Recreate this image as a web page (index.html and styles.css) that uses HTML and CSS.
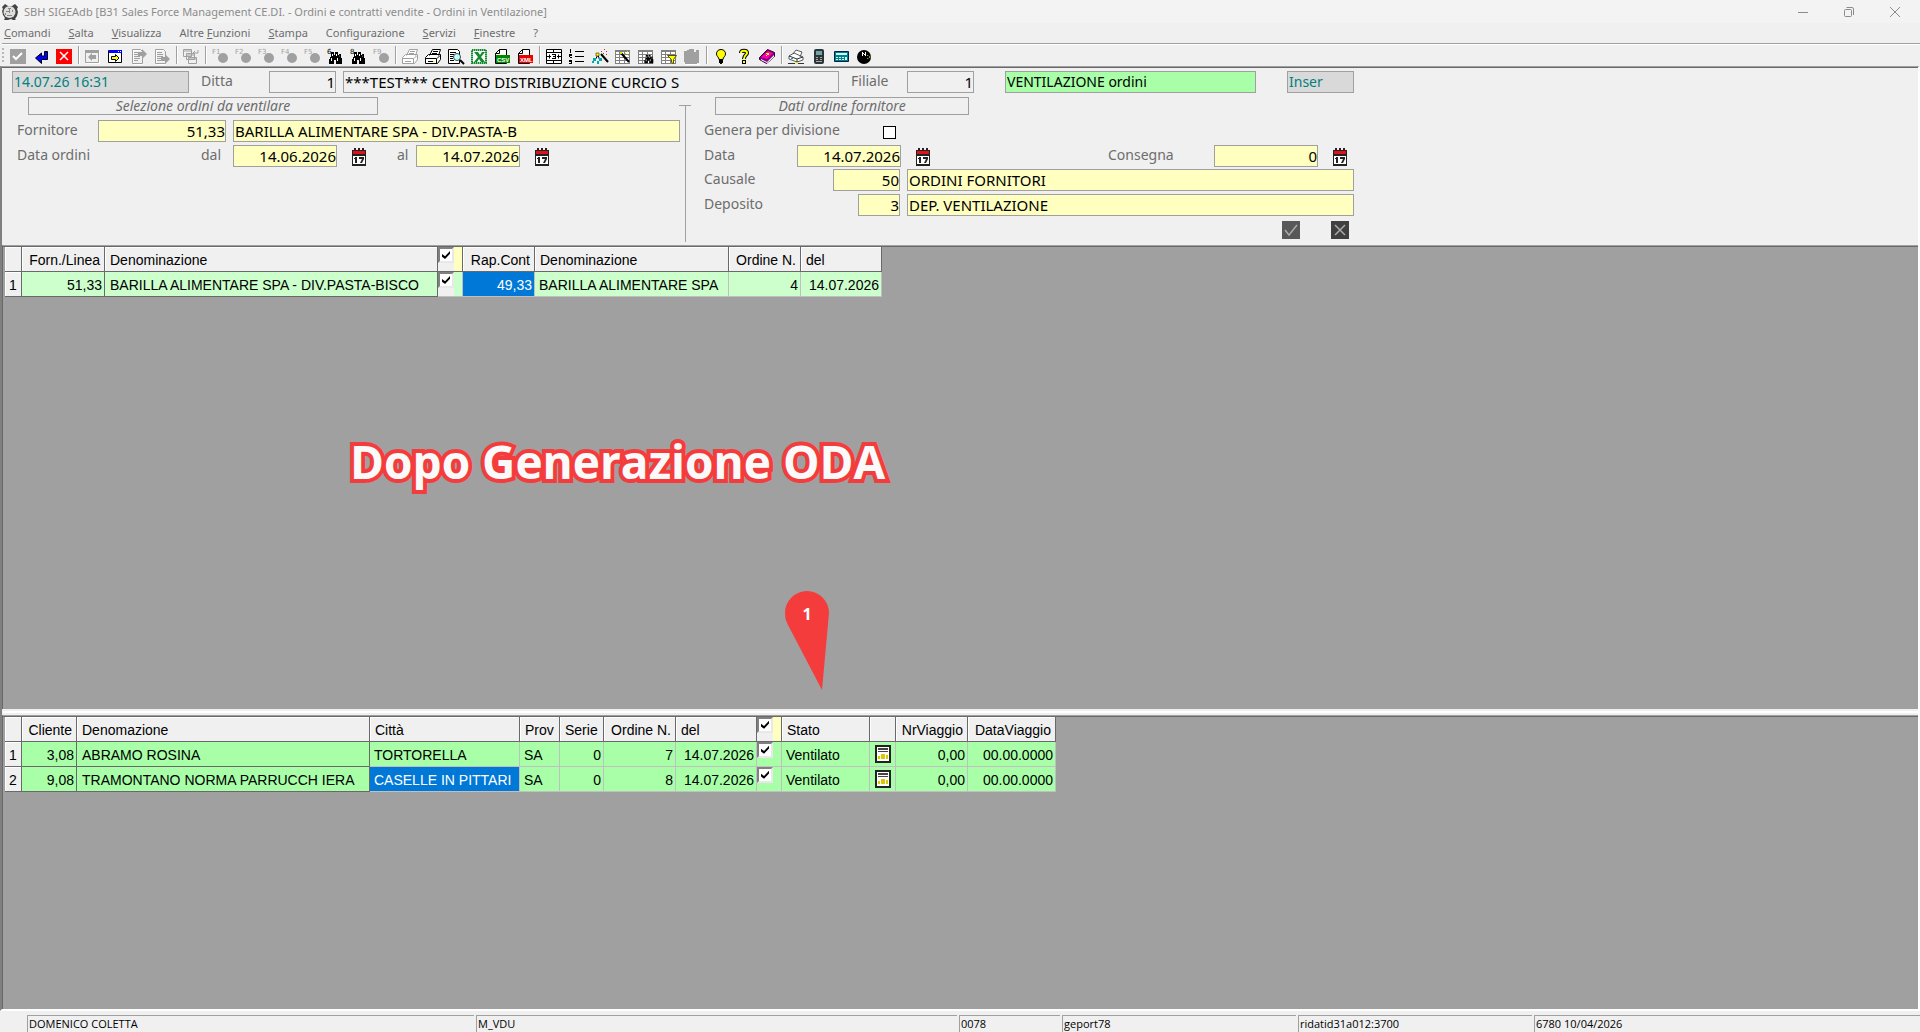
FILE: index.html
```
<!DOCTYPE html>
<html lang="it">
<head>
<meta charset="utf-8">
<title>SBH SIGEAdb</title>
<link rel="stylesheet" href="styles.css">
</head>
<body>
<svg class="defs" aria-hidden="true">
  <symbol id="cal" viewBox="0 0 16 18">
    <path fill="#222" d="M1 2h2V0h2v2h2V0h2v2h2V0h2v2h2v16H1z"/>
    <path fill="#e0101c" d="M2 3h12v3H2z"/><path fill="#fff" d="M2 8h12v8H2z"/>
    <path fill="#222" d="M4 9h2v6H4zM3 10h1v1H3zM8 9h5v2l-2 4H9l2-4H8z"/>
  </symbol>
  <symbol id="binoc" viewBox="0 0 16 16">
    <path d="M4 3h3v3h1V3h3v3h1v2h1v2h1v5h-5v-4H7v4H2v-5h1V8h1z"/><path d="M12 5h2v4h1v6h-2z"/>
    <path fill="#fff" d="M4 9h1v3H4zM10 9h1v3h-1zM5 5h1v2H5zM9 5h1v2H9z"/>
  </symbol>
  <symbol id="grid" viewBox="0 0 16 16">
    <path fill="#fff" d="M0 1h15v13H0z"/><path fill="#808080" d="M0 1h15v2H0zM0 3h1v12H0zM4 3h1v12H4zM9 3h1v12H9zM14 3h1v12h-1zM0 14h15v1H0zM1 5h13v1H1zM1 8h13v1H1zM1 11h13v1H1z"/>
  </symbol>
  <symbol id="page" viewBox="0 0 16 16">
    <path fill="#fff" stroke="#000" d="M1.500 4.500L5.500.5H12.500V14.500H1.500z"/><path fill="none" stroke="#000" d="M1.500 4.500H5.500V.5"/>
  </symbol>
  <symbol id="print" viewBox="0 0 16 16">
    <path fill="#fff" stroke="currentColor" d="M4.500 6.500L7.500.5h8l-2 6M.5 8.500l3-3h12v5l-3 4H.5z"/>
    <path fill="none" stroke="currentColor" d="M8 2.500h5M7 4.500h5M.5 9.500h11v5M12 9.500l3-3M3 12.500h6"/>
  </symbol>
  <symbol id="doc" viewBox="0 0 16 16">
    <path fill="none" stroke="#fff" d="M2.500 1.500h9v14h-9z"/><path fill="none" stroke="#a0a0a0" d="M1.500.5h8l2 2v12h-10zM3 3.500h5M3 5.500h6M3 7.500h6M3 9.500h6M3 11.500h4"/>
  </symbol>
  <symbol id="report" viewBox="0 0 16 18">
    <path fill="#fff" stroke="#222" stroke-width="2" d="M1 1h14v16H1z"/><path fill="#444" d="M3 3h10v2H3zM3 6h10v1H3z"/>
    <path fill="#dcc800" d="M3 11h2v3H3zM6 9h4v5H6zM11 10h2v4h-2z"/>
  </symbol>
</svg>

<header class="titlebar">
  <svg class="appicon" viewBox="0 0 16 16"><path fill="#444" d="M0 3l3-3 3 2h4l3-2 3 3-1 2 1 3-1 4-2 3 1 1h-3l-2-1-3 1H2l1-2-2-3-1-4 1-2z"/><circle cx="7.500" cy="8" r="6" fill="#dededa"/><path fill="#888" d="M6 4h3v1H6zM4 7h4v1H4zM7 5h1v4H7zM5 11h5v1H5zM10 6h1v2h-1zM3 9h1v2H3z"/></svg>
  <h1>SBH SIGEAdb [B31 Sales Force Management CE.DI. - Ordini e contratti vendite - Ordini in Ventilazione]</h1>
  <button class="win" aria-label="Riduci"><svg viewBox="0 0 10 10"><path d="M0 5.500h10"/></svg></button>
  <button class="win" aria-label="Ripristina"><svg viewBox="0 0 10 10"><rect x=".5" y="2.500" width="7" height="7" rx="1"/><path d="M2.500.5H8q1.500 0 1.500 1.500v6"/></svg></button>
  <button class="win" aria-label="Chiudi"><svg viewBox="0 0 10 10"><path d="M0 0l10 10M10 0L0 10"/></svg></button>
</header>

<nav class="menu">
  <a href="#"><u>C</u>omandi</a><a href="#"><u>S</u>alta</a><a href="#"><u>V</u>isualizza</a><a href="#">Altre <u>F</u>unzioni</a><a href="#"><u>S</u>tampa</a><a href="#">Confi<u>g</u>urazione</a><a href="#"><u>S</u>ervizi</a><a href="#"><u>F</u>inestre</a><a href="#">?</a>
</nav>

<div class="toolbar" role="toolbar">
  <button aria-label="Conferma"><svg viewBox="0 0 16 16"><path fill="#a0a0a0" d="M0 0h16v15H0z"/><path fill="none" stroke="#fff" stroke-width="2" d="M3 7l3 3 6-6"/></svg></button>
  <button aria-label="Invio"><svg viewBox="0 0 16 16"><path fill="#00f" stroke="#000" d="M11.500 2.500h3v8h-6v4l-6-5.500 6-5v3h3z"/></svg></button>
  <button aria-label="Annulla"><svg viewBox="0 0 16 16"><path fill="#f00" d="M0 0h16v15H0z"/><path fill="none" stroke="#fff" stroke-width="1.500" d="M4 3l8 8M12 3l-8 8"/></svg></button>
  <hr>
  <button aria-label="Indietro"><svg viewBox="0 0 16 16"><path fill="#fff" d="M1 2h14v13H1z"/><path fill="#f0f0f0" stroke="#a0a0a0" d="M.5 1.500h13v12H.5z"/><path fill="#a0a0a0" d="M0 1h14v3H0zM3 8l4-4v2h4v4H7v2z"/></svg></button>
  <button aria-label="Avanti"><svg viewBox="0 0 16 16"><path fill="#fff" stroke="#000" d="M.5 1.500h13v12H.5z"/><path fill="#00f" d="M1 1h13v3H1z"/><path fill="#fff" d="M10 2h1v1h-1zM12 2h1v1h-1z"/><path fill="#ff0" stroke="#000" d="M3.500 7.500h4v-2l3.500 3.500-3.500 3.500v-2h-4z"/></svg></button>
  <button aria-label="Esporta"><svg viewBox="0 0 16 16"><use href="#doc"/><path fill="#a0a0a0" d="M7 3h4V0l5 5-5 5V7H7z"/></svg></button>
  <button aria-label="Importa"><svg viewBox="0 0 16 16"><use href="#doc"/><path fill="#a0a0a0" d="M7 8h4V5l5 5-5 5v-3H7z"/></svg></button>
  <hr>
  <button aria-label="Copia finestre"><svg viewBox="0 0 16 16"><g fill="#f0f0f0" stroke="#a0a0a0"><path d="M.5.5h8v7h-8zM.5 2h8M3.500 4.500h8v6h-8zM3.500 6h8M5.500 8.500h8v6h-8zM5.500 10h8"/></g><path fill="none" stroke="#a0a0a0" d="M11 4h4V1M12 2l-2 2 2 2"/></svg></button>
  <hr>
  <button class="fkey"><svg viewBox="0 0 16 16"><circle cx="11" cy="9" r="5"/><text y="5">F1</text></svg></button>
  <button class="fkey"><svg viewBox="0 0 16 16"><circle cx="11" cy="9" r="5"/><text y="5">F2</text></svg></button>
  <button class="fkey"><svg viewBox="0 0 16 16"><circle cx="11" cy="9" r="5"/><text y="5">F3</text></svg></button>
  <button class="fkey"><svg viewBox="0 0 16 16"><circle cx="11" cy="9" r="5"/><text y="5">F4</text></svg></button>
  <button class="fkey"><svg viewBox="0 0 16 16"><circle cx="11" cy="9" r="5"/><text y="5">F5</text></svg></button>
  <button class="fnum"><svg viewBox="0 0 16 16"><use href="#binoc"/><text y="5">6</text></svg></button>
  <button class="fnum"><svg viewBox="0 0 16 16"><use href="#binoc"/><text y="5">8</text></svg></button>
  <button class="fkey"><svg viewBox="0 0 16 16"><circle cx="11" cy="9" r="5"/><text y="5">F9</text></svg></button>
  <hr>
  <button aria-label="Stampa elenco" class="dim"><svg viewBox="0 0 16 16"><use href="#print"/></svg></button>
  <button aria-label="Stampa"><svg viewBox="0 0 16 16"><use href="#print"/><path fill="#ff0" d="M8 12h2v1H8z"/></svg></button>
  <button aria-label="Anteprima"><svg viewBox="0 0 16 16"><path fill="#fff" stroke="#000" d="M.5.5h9l2 2v12H.5z"/><path stroke="#000" d="M2 3.500h6M2 5.500h4M2 7.500h3M2 9.500h3M2 11.500h4"/><circle cx="9" cy="8" r="3.500" fill="#bff" stroke="#444"/><path stroke="#000" stroke-width="2" d="M12 11l4 4"/></svg></button>
  <button aria-label="Excel"><svg viewBox="0 0 16 16"><path fill="#fff" stroke="#128a2e" stroke-width="2" stroke-dasharray="1.500 .5" d="M1 1h14v13H1z"/><path fill="#128a2e" d="M3 3h4l2 3 2-3h3l-4 5 4 5h-4l-2-3-2 3H3l4-5z"/></svg></button>
  <button aria-label="CSV" class="tag"><svg viewBox="0 0 16 16"><use href="#page"/><path fill="#080" d="M2 6h14v8H2z"/><text x="3" y="13">CSV</text></svg></button>
  <button aria-label="XML" class="tag"><svg viewBox="0 0 16 16"><use href="#page"/><path fill="#e00" d="M2 6h14v8H2z"/><text x="3" y="13">XML</text></svg></button>
  <hr>
  <button aria-label="Colonne"><svg viewBox="0 0 16 16"><path fill="#fff" stroke="#000" d="M.5.5h15v14H.5zM0 3.500h16M0 11.500h16M7.500 0v4M7.500 11v4M1 7.500h4M11 7.500h4M3.500 5.500v4M12.500 5.500v4"/><path d="M6 5h4v5H6V9h3V8H7V7h2V6H6z"/></svg></button>
  <button aria-label="Elenco numerato"><svg viewBox="0 0 16 16"><path d="M6 2h9v1H6zM6 7h9v1H6zM6 12h9v1H6zM1 0h1v4H1zM0 5h3v2H1v2h2V8H0zM0 11h3v4H0v-1h2v-1H0z"/></svg></button>
  <button aria-label="Procedura"><svg viewBox="0 0 16 16"><path stroke="#000" stroke-width="2" d="M9 5l7 8"/><path fill="none" stroke="#000" d="M6 6l-3 5M6 6l2 6"/><path fill="#ff0" stroke="#000" stroke-width=".5" d="M4 4h3v3H4z"/><path fill="#0aa" d="M1 9h3v3H1zM7 9h3v3H7zM0 12h2v2H0zM5 12h2v3H5z"/><path fill="#a33" d="M9 2h1v1H9zM12 0h1v1h-1zM14 2h1v1h-1zM11 4h1v1h-1zM14 5h1v1h-1z"/></svg></button>
  <button aria-label="Modifica griglia"><svg viewBox="0 0 16 16"><use href="#grid"/><path stroke="#000" stroke-width="2" d="M6 4l8 9"/><path fill="#dd0" d="M5 3h2v2H5zM12 2h1v1h-1zM10 4h1v1h-1zM13 6h1v1h-1z"/></svg></button>
  <button aria-label="Cerca in griglia"><svg viewBox="0 0 16 16"><use href="#grid"/><use href="#binoc" x="5" y="4" width="11" height="11"/></svg></button>
  <button aria-label="Filtra"><svg viewBox="0 0 16 16"><use href="#grid"/><path fill="#ff0" stroke="#550" d="M6.500 6.500h9l-3 4v4l-2-1v-3z"/></svg></button>
  <button aria-label="Grafico"><svg viewBox="0 0 16 16"><path fill="#a0a0a0" d="M0 2h3V1h2V0h5v3h2V1h3v13h-2v1H1v-2H0z"/><path fill="#fff" d="M1 15h15v1H1z"/></svg></button>
  <hr>
  <button aria-label="Suggerimento"><svg viewBox="0 0 16 16"><path fill="#ff0" stroke="#000" d="M8 .5c3 0 4.500 2 4.500 4.500S10 8 10 10.500H6C6 8 3.500 7.500 3.500 5S5 .5 8 .5z"/><path d="M6 11h4v3H9v1H7v-1H6z"/></svg></button>
  <button aria-label="Aiuto"><svg viewBox="0 0 16 16"><path fill="none" stroke="#000" stroke-width="4" d="M5 4c0-3 6-3 6 0 0 2-3 2-3 6M8 11v4"/><path fill="none" stroke="#ff0" stroke-width="2" d="M5 4c0-3 6-3 6 0 0 2-3 2-3 6M8 12v2"/></svg></button>
  <button aria-label="Manuale"><svg viewBox="0 0 16 16"><path fill="#808" stroke="#303" d="M.5 8.500l8-8 7 3v4l-8 7-7-4z"/><path fill="#fff" d="M2 10l6 3 7-7v2l-7 6-6-3z"/><path fill="#f0a" d="M2 8l7-6 5 2-6 6z"/><path fill="#ff0" d="M7 4h3v2H8v1H7V6h1V5H7z"/></svg></button>
  <hr>
  <button aria-label="Stampante di rete"><svg viewBox="0 0 16 16"><path fill="#fff" stroke="#333" stroke-width=".8" d="M5 5l3-4 6 2-2 5M1 7l5-3 9 4v3l-6 2-8-3z"/><path fill="none" stroke="#333" d="M1 7l8 3v3M9 10l6-2M0 14.500h16"/><path fill="#0aa" d="M3 9h2v1H3z"/><path fill="#ff0" d="M7 14h3v1H7z"/></svg></button>
  <button aria-label="Telefono"><svg viewBox="0 0 16 16"><rect x="3" width="10" height="15" rx="2" fill="#2c3438"/><path fill="#6ea4a8" d="M5 2h6v4H5z"/><path fill="#aaa" d="M5 8h2v1H5zM9 8h2v1H9zM5 10h2v1H5zM9 10h2v1H9zM5 12h6v1H5z"/></svg></button>
  <button aria-label="Calcolatrice"><svg viewBox="0 0 16 16"><path fill="#00808a" stroke="#024" d="M.5 2.500h14v10H.5z"/><path fill="#cff" d="M2 4h11v2H2zM2 8h2v1H2zM5 8h2v1H5zM8 8h2v1H8zM2 10h2v1H2zM5 10h2v1H5zM8 10h2v1H8zM11 8h2v3h-2z"/></svg></button>
  <button aria-label="Orologio"><svg viewBox="0 0 16 16"><circle cx="7" cy="8" r="7"/><path fill="#fff" d="M5 3h1v1h1v1h1V3h1v4H8V6H7V5H6v2H5z"/><path fill="#cc0" d="M10 6l4 2-4 2V9h2V7h-2z"/></svg></button>
</div>

<main class="workspace">
  <form class="panel">
    <div class="row top">
      <input class="field info" aria-label="Data e ora" value="14.07.26 16:31">
      <label for="ditta">Ditta</label>
      <input class="field num plain" id="ditta" value="1">
      <input class="field plain company" aria-label="Ragione sociale" value="***TEST*** CENTRO DISTRIBUZIONE CURCIO S">
      <label for="filiale">Filiale</label>
      <input class="field num plain" id="filiale" value="1">
      <input class="field mode" aria-label="Funzione" value="VENTILAZIONE ordini">
      <input class="field info" aria-label="Stato" value="Inser">
    </div>
    <div class="sections">
      <section class="left">
        <h2>Selezione ordini da ventilare</h2>
        <div class="row supplier">
          <label for="forn">Fornitore</label>
          <input class="field num" id="forn" value="51,33">
          <input class="field desc" aria-label="Nome fornitore" value="BARILLA ALIMENTARE SPA - DIV.PASTA-B">
        </div>
        <div class="row dates">
          <span>Data ordini</span>
          <label for="dal">dal</label>
          <input class="field num" id="dal" value="14.06.2026">
          <button type="button" class="calbtn" aria-label="Calendario"><svg><use href="#cal"/></svg></button>
          <label for="al">al</label>
          <input class="field num" id="al" value="14.07.2026">
          <button type="button" class="calbtn" aria-label="Calendario"><svg><use href="#cal"/></svg></button>
        </div>
      </section>
      <div class="divider"></div>
      <section class="right">
        <h2>Dati ordine fornitore</h2>
        <div class="row division">
          <label for="gen">Genera per divisione</label>
          <input type="checkbox" class="square" id="gen">
        </div>
        <div class="row delivery">
          <label for="data">Data</label>
          <input class="field num" id="data" value="14.07.2026">
          <button type="button" class="calbtn" aria-label="Calendario"><svg><use href="#cal"/></svg></button>
          <label for="cons">Consegna</label>
          <input class="field num" id="cons" value="0">
          <button type="button" class="calbtn" aria-label="Calendario"><svg><use href="#cal"/></svg></button>
        </div>
        <div class="row reason">
          <label for="caus">Causale</label>
          <input class="field num" id="caus" value="50">
          <input class="field desc" aria-label="Descrizione causale" value="ORDINI FORNITORI">
        </div>
        <div class="row depot">
          <label for="dep">Deposito</label>
          <input class="field num" id="dep" value="3">
          <input class="field desc" aria-label="Descrizione deposito" value="DEP. VENTILAZIONE">
        </div>
        <div class="actions">
          <button type="button" aria-label="Conferma"><svg viewBox="0 0 18 18"><path fill="#585858" d="M0 0h18v18H0z"/><path fill="none" stroke="#aaa" stroke-width="1.500" d="M3 9l4 5 8-10"/></svg></button>
          <button type="button" aria-label="Annulla"><svg viewBox="0 0 18 18"><path fill="#404040" d="M0 0h18v18H0z"/><path fill="none" stroke="#aaa" stroke-width="1.500" d="M4 4l10 10M14 4L4 14"/></svg></button>
        </div>
      </section>
    </div>
  </form>

  <section class="pane upper">
    <table class="orders">
      <colgroup><col class="w17"><col class="w83"><col class="w333"><col class="w25"><col class="w72"><col class="w194"><col class="w72"><col class="w81"></colgroup>
      <thead><tr><th></th><th class="r">Forn./Linea</th><th>Denominazione</th><th class="tick"><input type="checkbox" checked aria-label="Seleziona tutti"></th><th class="r">Rap.Cont</th><th>Denominazione</th><th class="r">Ordine N.</th><th>del</th></tr></thead>
      <tbody><tr><th>1</th><td class="r fix">51,33</td><td class="fix">BARILLA ALIMENTARE SPA - DIV.PASTA-BISCO</td><td class="tick"><input type="checkbox" checked aria-label="Seleziona riga 1"></td><td class="r sel">49,33</td><td>BARILLA ALIMENTARE SPA</td><td class="r">4</td><td class="r">14.07.2026</td></tr></tbody>
    </table>
    <p class="callout">Dopo Generazione ODA</p>
    <div class="pin"><svg viewBox="0 0 46 100"><path fill="#f43c3c" d="M1 22A22 22 0 0 1 45 22L38 99L3.500 33A22 22 0 0 1 1 22z"/></svg><b>1</b></div>
  </section>

  <section class="pane lower">
    <table class="clients">
      <colgroup><col class="w17"><col class="w55"><col class="w293"><col class="w150"><col class="w40"><col class="w44"><col class="w72"><col class="w81"><col class="w25"><col class="w88"><col class="w26"><col class="w72"><col class="w88"></colgroup>
      <thead><tr><th></th><th class="r">Cliente</th><th>Denomazione</th><th>Città</th><th>Prov</th><th>Serie</th><th class="r">Ordine N.</th><th>del</th><th class="tick"><input type="checkbox" checked aria-label="Seleziona tutti"></th><th>Stato</th><th></th><th class="r">NrViaggio</th><th class="r">DataViaggio</th></tr></thead>
      <tbody>
        <tr><th>1</th><td class="r fix">3,08</td><td class="fix">ABRAMO ROSINA</td><td>TORTORELLA</td><td>SA</td><td class="r">0</td><td class="r">7</td><td class="r">14.07.2026</td><td class="tick"><input type="checkbox" checked aria-label="Seleziona riga 1"></td><td>Ventilato</td><td class="ico"><svg><use href="#report"/></svg></td><td class="r">0,00</td><td class="r">00.00.0000</td></tr>
        <tr><th>2</th><td class="r fix">9,08</td><td class="fix">TRAMONTANO NORMA PARRUCCH IERA</td><td class="sel">CASELLE IN PITTARI</td><td>SA</td><td class="r">0</td><td class="r">8</td><td class="r">14.07.2026</td><td class="tick"><input type="checkbox" checked aria-label="Seleziona riga 2"></td><td>Ventilato</td><td class="ico"><svg><use href="#report"/></svg></td><td class="r">0,00</td><td class="r">00.00.0000</td></tr>
      </tbody>
    </table>
  </section>
</main>

<footer class="status">
  <span>DOMENICO COLETTA</span><span>M_VDU</span><span>0078</span><span>geport78</span><span>ridatid31a012:3700</span><span>6780 10/04/2026</span>
</footer>
</body>
</html>
```
FILE: styles.css
```
* { box-sizing: border-box; }
body {
  margin: 0;
  min-height: 100vh;
  display: flex;
  flex-direction: column;
  background: #f0f0f0;
  color: #000;
  font-family: "Open Sans", "Noto Sans", sans-serif;
  font-size: 11px;
}
button { border: 0; padding: 0; background: none; font: inherit; }
svg { display: block; overflow: visible; }
.defs { position: absolute; width: 0; height: 0; }

/* Title bar */
.titlebar { display: flex; align-items: center; height: 23px; padding: 0 2px; background: #f3f3f3; color: #8c8c8c; }
.appicon { width: 16px; height: 16px; }
.titlebar h1 { flex: 1; margin: 0 0 0 6px; font: 11px "Noto Sans", "Open Sans", sans-serif; white-space: nowrap; }
.win { width: 46px; height: 22px; display: flex; justify-content: center; align-items: center; }
.win svg { width: 10px; height: 10px; fill: none; stroke: #8c8c8c; }

/* Menu */
.menu { display: flex; gap: 18px; height: 20px; padding-left: 4px; font: 11px/20px "Noto Sans", "Open Sans", sans-serif; }
.menu a { color: #6d6d6d; text-decoration: none; }

/* Toolbar */
.toolbar { display: flex; height: 23px; margin-left: 2px; border-top: 1px solid #a0a0a0; box-shadow: inset 0 1px #fff; }
.toolbar::before { content: ""; width: 2px; margin: 4px 3px 2px 0; background: repeating-linear-gradient(#b8b8b8 0 2px, transparent 2px 4px); }
.toolbar button { width: 23px; padding: 3px 4px 0 3px; flex: none; }
.toolbar svg { width: 16px; height: 16px; }
.toolbar hr { width: 6px; flex: none; margin: 2px 0; border: 0; background: linear-gradient(90deg, transparent 2px, #a0a0a0 2px 3px, #fff 3px 4px, transparent 4px); }
.toolbar text { font: 7px "DejaVu Sans", sans-serif; }
.fkey circle, .fkey text { fill: #a0a0a0; }
.dim { color: #a0a0a0; }
.toolbar .tag text { font: bold 6px "Liberation Sans", sans-serif; fill: #fff; }

/* Workspace */
.workspace { flex: 1; display: flex; flex-direction: column; border: 2px solid #fff; border-top: 1px solid #a0a0a0; border-left-color: #808080; box-shadow: inset 0 1px #696969; padding-top: 1px; }
.panel { height: 177px; padding-top: 3px; color: #6d6d6d; }
.row { display: grid; height: 22px; white-space: nowrap; }
.field {
  min-width: 0;
  width: 100%;
  height: 22px;
  padding: 0 1px 1px;
  border: 1px solid #a0a0a0;
  border-radius: 0;
  background: #ffffc0;
  color: #000;
  font: 15px "Noto Sans", "Open Sans", sans-serif;
  outline: 0;
}
.row label, .row span { font: 14px/20px "Noto Sans", "Open Sans", sans-serif; }
.num { text-align: right; padding-right: 0; }
.plain { background: #f0f0f0; }
.info, .mode { font-size: 14px; }
.info { background: #d9d9d9; color: #008080; }
.mode { background: #a8ffa8; }
.top { margin-left: 10px; grid-template-columns: 177px 80px 67px 503px 68px 67px 282px 98px; }
.top label { padding-left: 12px; }
.top .company { width: 496px; margin-left: 7px; }
.top .mode { width: 251px; margin-left: 31px; }
.top .info:last-child { width: 67px; margin-left: 31px; }
.sections { display: flex; padding-top: 4px; }
.left { width: 677px; padding-left: 15px; }
.divider { width: 12px; height: 137px; margin-top: 8px; border-top: 1px solid #a0a0a0; background: linear-gradient(90deg, transparent 6px, #a0a0a0 6px 7px, transparent 7px); }
.right { padding-left: 13px; width: 672px; }
.panel h2 { margin: 0 0 5px 11px; width: 350px; height: 18px; border: 1px solid #a0a0a0; font: italic 14px/16px "Noto Sans", "Open Sans", sans-serif; text-align: center; }
.right h2 { width: 254px; }
.row + .row { margin-top: 3px; }
.row + .reason { margin-top: 2px; }
.supplier { grid-template-columns: 81px 128px 454px; }
.desc { margin-left: 7px; width: calc(100% - 7px); }
.dates { grid-template-columns: 184px 32px 104px 46px 33px 104px 46px; }
.dates .calbtn + label { padding-left: 14px; }
.calbtn { width: 16px; height: 18px; margin: 3px 0 0 14px; }
.calbtn svg { width: 16px; height: 18px; }
.division { grid-template-columns: 179px 13px; }
.square { appearance: none; width: 13px; height: 13px; margin: 6px 0 0; border: 1px solid #000; background: #fff; }
.delivery { grid-template-columns: 93px 104px 207px 106px 104px 46px; }
.reason { grid-template-columns: 129px 67px 454px; }
.depot { grid-template-columns: 154px 42px 454px; }
.actions { display: flex; justify-content: flex-end; gap: 31px; padding: 5px 14px 0 0; }
.actions svg { width: 18px; height: 18px; }

/* Data panes */
.pane { position: relative; padding: 1px 0 0 2px; border-left: 1px solid #696969; border-top: 1px solid #a0a0a0; background: #a0a0a0; box-shadow: inset 0 1px #696969; }
.upper { flex: 463 0 0; }
.lower { flex: 293 0 0; box-shadow: 0 -6px #f0f0f0, inset 0 1px #696969; margin-top: 6px; }
.lower::before { content: ""; position: absolute; left: 0; right: 0; top: -5px; height: 2px; background: #fff; }
table { table-layout: fixed; border-collapse: separate; border-spacing: 0; font: 14px/22px "Liberation Sans", Arial, sans-serif; white-space: nowrap; }
.orders { width: 877px; }
.clients { width: 1051px; }
th, td { height: 25px; padding: 2px 4px 0 5px; border: solid #c0c0c0; border-width: 0 1px 1px 0; text-align: left; font-weight: 400; overflow: hidden; }
td { background: #a8ffa8; padding: 2px 2px 0 4px; }
.orders td { background: #ccffcc; }
th { background: #f0f0f0; border-color: #696969; box-shadow: inset 1px 1px #fff; }
tbody th { text-align: center; padding: 2px 0 0; }
td.fix { border-color: #696969; padding-left: 5px; }
.r { text-align: right; }
.orders td.sel, .clients td.sel { background: #0078d7; color: #fff; }
.tick, td.tick { padding: 0; vertical-align: top; line-height: 0; }
th.tick { background: linear-gradient(90deg, transparent 16px, #ffffc0 16px) #f0f0f0; box-shadow: none; }
.orders td.tick { background: linear-gradient(90deg, #f0f0f0 16px, #ccffcc 16px); }
.tick input { appearance: none; width: 16px; height: 16px; margin: 0; border: 2px solid; border-color: #808080 #e8e8e8 #e8e8e8 #808080; background: #fff; }
.tick input::before { content: ""; display: block; width: 8px; height: 8px; margin: 2px; background: #000; clip-path: polygon(0 38%, 38% 65%, 100% 0, 100% 35%, 38% 100%, 0 72%); }
td.ico { padding: 0 0 0 5px; }
.ico svg { width: 16px; height: 18px; }
.w17 { width: 17px; } .w25 { width: 25px; } .w26 { width: 26px; } .w40 { width: 40px; } .w44 { width: 44px; }
.w55 { width: 55px; } .w72 { width: 72px; } .w81 { width: 81px; } .w83 { width: 83px; } .w88 { width: 88px; }
.w150 { width: 150px; } .w194 { width: 194px; } .w293 { width: 293px; } .w333 { width: 333px; }

/* Annotations over the upper pane */
.callout { position: absolute; left: 347px; top: 182px; margin: 0; font: bold 46px/66px "Open Sans", "Noto Sans", sans-serif; color: #fafafa; -webkit-text-stroke: 8px #f43c3c; paint-order: stroke fill; white-space: nowrap; }
.pin { position: absolute; left: 781px; top: 345px; width: 46px; height: 100px; }
.pin b { position: absolute; left: 0; top: 12px; width: 46px; text-align: center; font-size: 16px; line-height: 22px; color: #fff; }

/* Status bar */
.status { display: grid; grid-template-columns: 447px 481px 101px 234px 234px 1fr; gap: 2px; margin-top: 4px; padding-left: 27px; height: 17px; }
.status span { border: solid #a0a0a0; border-width: 1px 0 0 1px; padding-left: 1px; line-height: 16px; white-space: nowrap; }
```
